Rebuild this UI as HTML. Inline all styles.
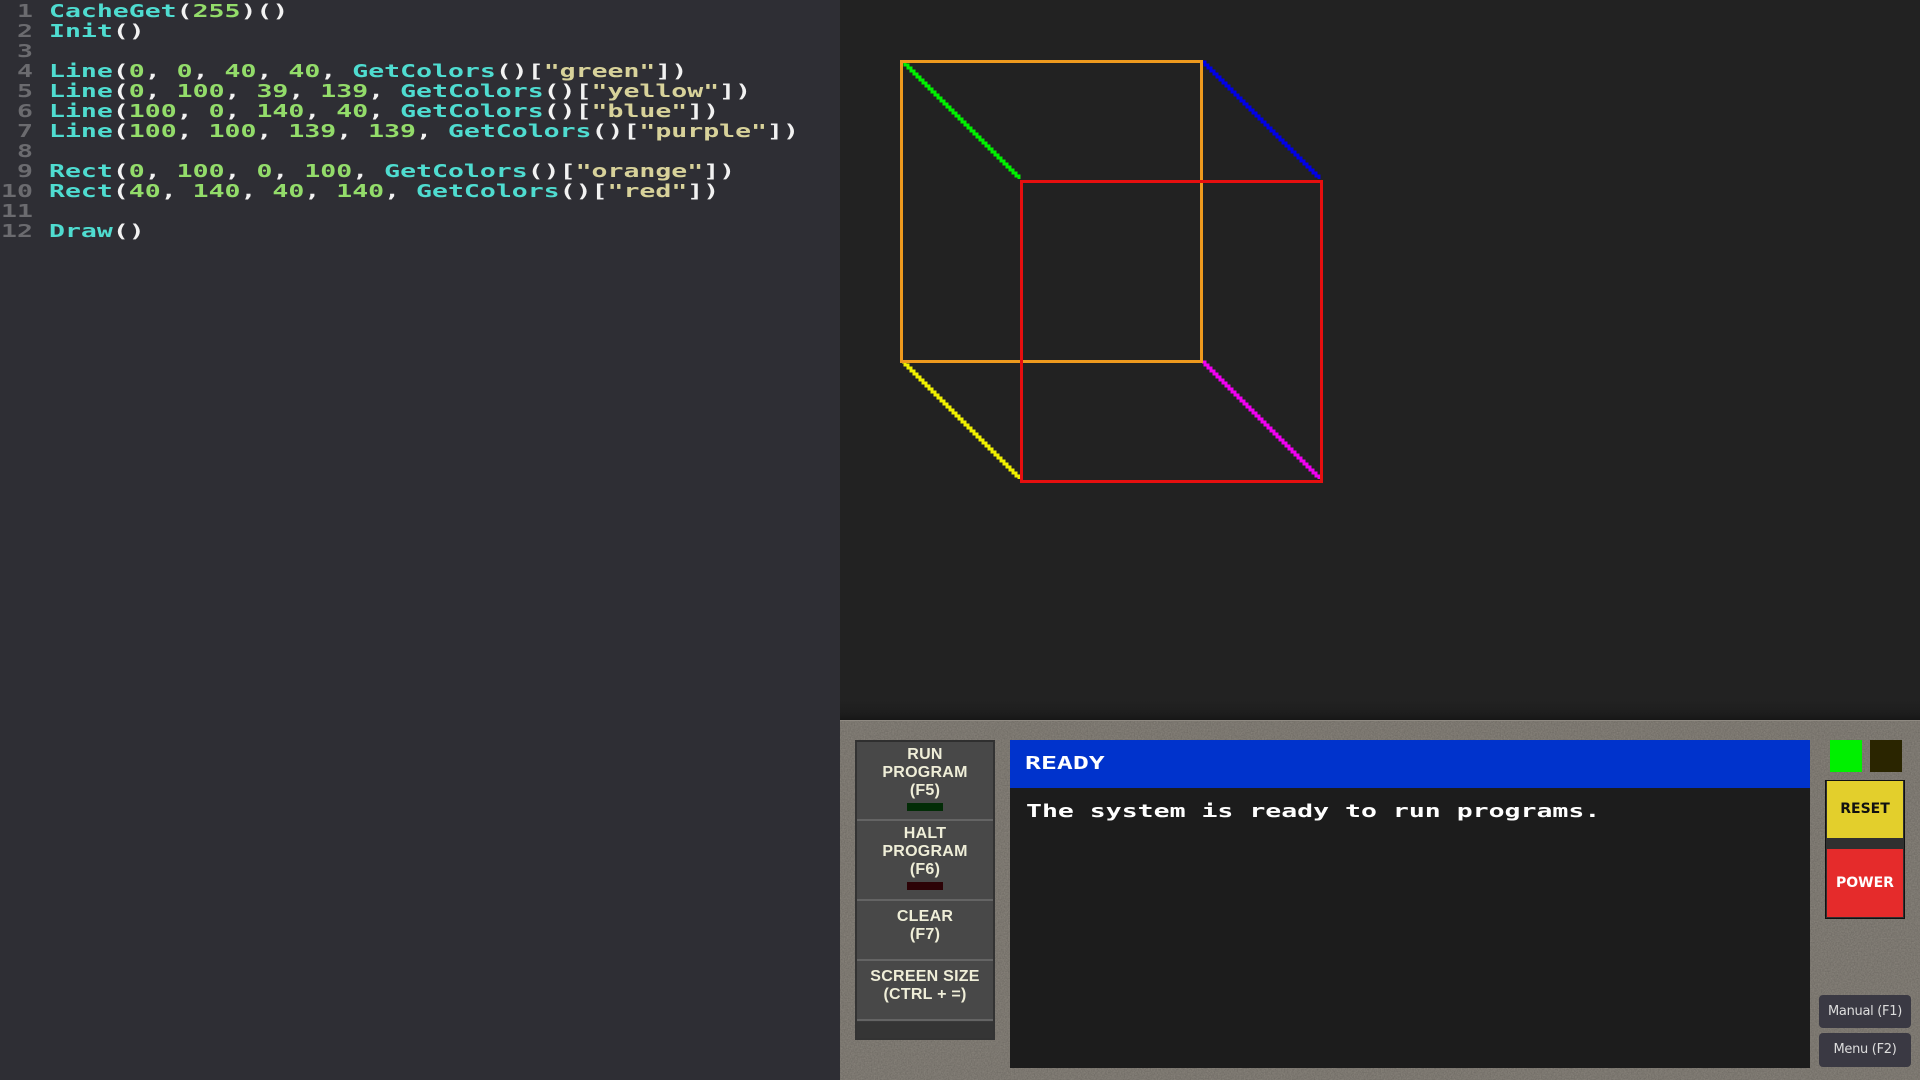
<!DOCTYPE html>
<html><head><meta charset="utf-8"><title>Console</title>
<style>
html,body{margin:0;padding:0;width:1920px;height:1080px;overflow:hidden;background:#222;}
*{box-sizing:border-box}
.abs{position:absolute}
#code{left:0;top:0;width:840px;height:1080px;background:#2e2e34;overflow:hidden}
.m{position:absolute;white-space:pre;margin:0;font-family:"DejaVu Sans Mono","Liberation Mono",monospace;font-weight:bold;font-size:18px;line-height:20px;transform-origin:0 0;transform:scaleX(1.472)}
.f{color:#4fdcd0}.n{color:#93dc6a}.p{color:#f2f2f2}.s{color:#d8d29a}
#nums{color:#6b6b6f;left:1px;top:2px}
#src{color:#f2f2f2;left:49px;top:2px}
#canvas{left:840px;top:0;width:1080px;height:720px;background:linear-gradient(#222 0,#222 700px,#1e1e1e 712px,#171717 720px)}
#panel{left:840px;top:720px;width:1080px;height:360px;background:#87827a;border-top:1px solid #8f8a82}
#left{left:855px;top:740px;width:140px;height:300px;background:#353535;border:2px solid #333;border-top:2px solid #2f2f2f}
.b{position:absolute;left:0;width:136px;background:#484848;border-bottom:2px solid #646464;box-shadow:0 1px 0 #3a3a3a;color:#efeed8;text-align:center;font:bold 16px/18px "Liberation Sans",sans-serif;letter-spacing:.25px;padding-top:4px}
.led{position:absolute;left:50px;width:36px;height:8px}
#head{left:1010px;top:740px;width:800px;height:48px;background:#0033cc}
#body{left:1010px;top:788px;width:800px;height:280px;background:#1c1c1c}
#ready{left:1025px;top:754px;color:#fff}
#msg{left:1026px;top:802px;color:#fff}
#reset{left:1825px;top:780px;width:80px;height:139px;background:#303030;border:1px solid #111}
.big{position:absolute;left:1px;width:76px;text-align:center;font:bold 14px "DejaVu Sans",sans-serif}
.tb{position:absolute;left:1819px;width:92px;background:#3a3943;border-radius:4px;color:#ddd;text-align:center;font:13px "DejaVu Sans",sans-serif;letter-spacing:-.3px}
</style></head><body>
<div id="code" class="abs">
<pre id="nums" class="m"> 1
 2
 3
 4
 5
 6
 7
 8
 9
10
11
12</pre>
<pre id="src" class="m"><span class="f">CacheGet</span>(<span class="n">255</span>)()
<span class="f">Init</span>()

<span class="f">Line</span>(<span class="n">0</span>, <span class="n">0</span>, <span class="n">40</span>, <span class="n">40</span>, <span class="f">GetColors</span>()[<span class="s">"green"</span>])
<span class="f">Line</span>(<span class="n">0</span>, <span class="n">100</span>, <span class="n">39</span>, <span class="n">139</span>, <span class="f">GetColors</span>()[<span class="s">"yellow"</span>])
<span class="f">Line</span>(<span class="n">100</span>, <span class="n">0</span>, <span class="n">140</span>, <span class="n">40</span>, <span class="f">GetColors</span>()[<span class="s">"blue"</span>])
<span class="f">Line</span>(<span class="n">100</span>, <span class="n">100</span>, <span class="n">139</span>, <span class="n">139</span>, <span class="f">GetColors</span>()[<span class="s">"purple"</span>])

<span class="f">Rect</span>(<span class="n">0</span>, <span class="n">100</span>, <span class="n">0</span>, <span class="n">100</span>, <span class="f">GetColors</span>()[<span class="s">"orange"</span>])
<span class="f">Rect</span>(<span class="n">40</span>, <span class="n">140</span>, <span class="n">40</span>, <span class="n">140</span>, <span class="f">GetColors</span>()[<span class="s">"red"</span>])

<span class="f">Draw</span>()</pre>
</div>
<div id="canvas" class="abs"></div>
<svg class="abs" style="left:840px;top:0" width="1080" height="720" viewBox="840 0 1080 720">
<defs><path id="st" d="M0 0
h3v3h3v3h3v3h3v3h3v3h3v3h3v3h3v3h3v3h3v3
h3v3h3v3h3v3h3v3h3v3h3v3h3v3h3v3h3v3h3v3
h3v3h3v3h3v3h3v3h3v3h3v3h3v3h3v3h3v3h3v3
h3v3h3v3h3v3h3v3h3v3h3v3h3v3h3v3h3v3" fill="none" stroke-width="3"/></defs>
<use href="#st" x="902" y="62" stroke="#00f000" shape-rendering="crispEdges"/>
<use href="#st" x="902" y="362" stroke="#f0f000" shape-rendering="crispEdges"/>
<use href="#st" x="1202" y="62" stroke="#0000e6" shape-rendering="crispEdges"/>
<use href="#st" x="1202" y="362" stroke="#f000f0" shape-rendering="crispEdges"/>
<rect x="901.5" y="61.5" width="300" height="300" fill="none" stroke="#ee9a1e" stroke-width="3" shape-rendering="crispEdges"/>
<rect x="1021.5" y="181.5" width="300" height="300" fill="none" stroke="#e60f0f" stroke-width="3" shape-rendering="crispEdges"/>
</svg>
<div id="panel" class="abs"></div>
<svg class="abs" style="left:840px;top:721px" width="1080" height="359"><filter id="nz"><feTurbulence type="fractalNoise" baseFrequency="0.7" numOctaves="2"/><feColorMatrix values="0 0 0 0 0  0 0 0 0 0  0 0 0 0 0  0 0 0 .25 -.04"/></filter><rect width="1080" height="359" filter="url(#nz)"/></svg>
<div id="left" class="abs">
<div class="b" style="top:0;height:79px">RUN<br>PROGRAM<br>(F5)<span class="led" style="top:61px;background:#022c06"></span></div>
<div class="b" style="top:79px;height:80px;padding-top:4px">HALT<br>PROGRAM<br>(F6)<span class="led" style="top:61px;background:#2c0206"></span></div>
<div class="b" style="top:159px;height:60px;padding-top:7px">CLEAR<br>(F7)</div>
<div class="b" style="top:219px;height:60px;padding-top:7px">SCREEN SIZE<br>(CTRL + =)</div>
</div>
<div id="head" class="abs"></div>
<div id="body" class="abs"></div>
<div id="ready" class="m">READY</div>
<div id="msg" class="m">The system is ready to run programs.</div>
<div class="abs" style="left:1830px;top:740px;width:32px;height:32px;background:#00f000"></div>
<div class="abs" style="left:1870px;top:740px;width:32px;height:32px;background:#2a2500"></div>
<div id="reset" class="abs">
<div class="big" style="top:0;height:57px;line-height:56px;background:#e3cf2c;color:#111">RESET</div>
<div class="big" style="top:68px;height:68px;line-height:68px;background:#e52b2b;color:#fff">POWER</div>
</div>
<div class="tb" style="top:995px;height:33px;line-height:33px">Manual (F1)</div>
<div class="tb" style="top:1033px;height:34px;line-height:34px">Menu (F2)</div>
</body></html>
